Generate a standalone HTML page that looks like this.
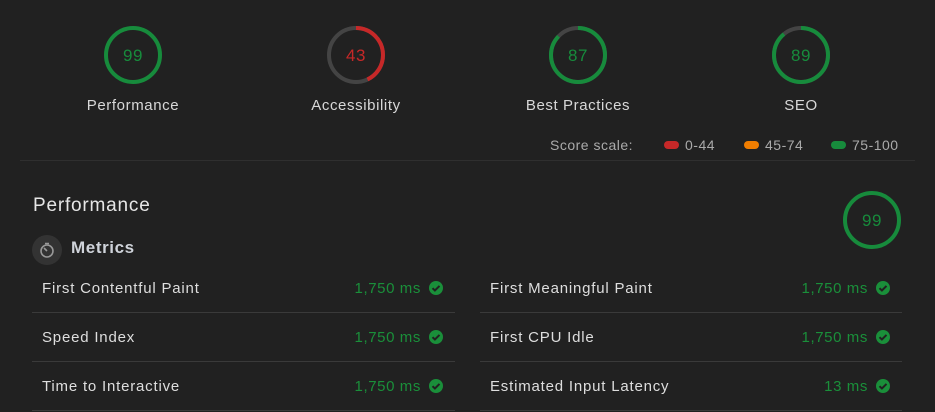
<!DOCTYPE html><html><head><style>
body{margin:0;width:935px;height:412px;background:#212121;font-family:"Liberation Sans",sans-serif;overflow:hidden;position:relative;color:#ddd}
.a{position:absolute}
.lbl{position:absolute;font-size:15px;color:#d8d8d8;text-align:center;width:200px;letter-spacing:0.6px}
.sc{font-size:14px;color:#aaa;letter-spacing:0.5px}
.row{position:absolute;height:49px;border-bottom:1px solid #3a3a3a;font-size:15px;color:#dedede;letter-spacing:0.8px}
.row span.n{position:absolute;left:10px;top:17px}
.row span.v{position:absolute;right:34px;top:17px;color:#1a8f3a;letter-spacing:0.6px}
.row svg{position:absolute;right:12px;top:18px}
</style></head><body>
<svg class="a" style="left:0;top:0" width="935" height="130">
<g fill="none" stroke-width="4">
<circle cx="133" cy="55" r="27" stroke="#178b3c"/>
<circle cx="356" cy="55" r="27" stroke="#444"/>
<circle cx="356" cy="55" r="27" stroke="#c62828" stroke-dasharray="72.9 200" transform="rotate(-90 356 55)"/>
<circle cx="578" cy="55" r="27" stroke="#444"/>
<circle cx="578" cy="55" r="27" stroke="#178b3c" stroke-dasharray="147.6 200" transform="rotate(-90 578 55)"/>
<circle cx="801" cy="55" r="27" stroke="#444"/>
<circle cx="801" cy="55" r="27" stroke="#178b3c" stroke-dasharray="151 200" transform="rotate(-90 801 55)"/>
</g>
<g font-family="Liberation Sans" font-size="17" text-anchor="middle" letter-spacing="0.5">
<text x="133" y="61" fill="#178b3c">99</text>
<text x="356" y="61" fill="#c62828">43</text>
<text x="578" y="61" fill="#178b3c">87</text>
<text x="801" y="61" fill="#178b3c">89</text>
</g></svg>
<div class="lbl" style="left:33px;top:97px">Performance</div>
<div class="lbl" style="left:256px;top:97px">Accessibility</div>
<div class="lbl" style="left:478px;top:97px">Best Practices</div>
<div class="lbl" style="left:701px;top:97px">SEO</div>
<div class="a sc" style="left:550px;top:137px">Score scale:</div>
<div class="a" style="left:664px;top:141px;width:15px;height:8px;border-radius:4px;background:#c62828"></div>
<div class="a sc" style="left:685px;top:137px">0-44</div>
<div class="a" style="left:744px;top:141px;width:15px;height:8px;border-radius:4px;background:#ef7d00"></div>
<div class="a sc" style="left:765px;top:137px">45-74</div>
<div class="a" style="left:831px;top:141px;width:15px;height:8px;border-radius:4px;background:#178b3c"></div>
<div class="a sc" style="left:852px;top:137px">75-100</div>
<div class="a" style="left:20px;top:160px;width:895px;height:1px;background:#2f2f2f"></div>
<div class="a" style="left:33px;top:195px;font-size:19px;color:#e6e6e6;letter-spacing:0.8px">Performance</div>
<svg class="a" style="left:842px;top:190px" width="62" height="62"><circle cx="30" cy="30" r="27" fill="none" stroke="#178b3c" stroke-width="4"/><text x="30" y="36" text-anchor="middle" font-family="Liberation Sans" font-size="17" fill="#178b3c" letter-spacing="0.5">99</text></svg>
<svg class="a" style="left:32px;top:235px" width="30" height="30"><circle cx="15" cy="15" r="15" fill="#333"/><circle cx="15" cy="16" r="6" fill="none" stroke="#999" stroke-width="1.6"/><path d="M15 16 L12 13 M13 8.5h4" stroke="#999" stroke-width="1.6"/></svg>
<div class="a" style="left:71px;top:238px;font-size:17px;font-weight:bold;color:#cfd3da;letter-spacing:0.6px">Metrics</div>
<div class="row" style="left:32px;top:263px;width:423px"><span class="n">First Contentful Paint</span><span class="v">1,750 ms</span><svg width="14" height="14"><circle cx="7" cy="7" r="7" fill="#1a8f3a"/><path d="M3.5 7.2l2.4 2.3 4.6-4.6" stroke="#212121" stroke-width="2" fill="none"/></svg></div>
<div class="row" style="left:32px;top:312px;width:423px"><span class="n">Speed Index</span><span class="v">1,750 ms</span><svg width="14" height="14"><circle cx="7" cy="7" r="7" fill="#1a8f3a"/><path d="M3.5 7.2l2.4 2.3 4.6-4.6" stroke="#212121" stroke-width="2" fill="none"/></svg></div>
<div class="row" style="left:32px;top:361px;width:423px"><span class="n">Time to Interactive</span><span class="v">1,750 ms</span><svg width="14" height="14"><circle cx="7" cy="7" r="7" fill="#1a8f3a"/><path d="M3.5 7.2l2.4 2.3 4.6-4.6" stroke="#212121" stroke-width="2" fill="none"/></svg></div>
<div class="row" style="left:480px;top:263px;width:422px"><span class="n">First Meaningful Paint</span><span class="v">1,750 ms</span><svg width="14" height="14"><circle cx="7" cy="7" r="7" fill="#1a8f3a"/><path d="M3.5 7.2l2.4 2.3 4.6-4.6" stroke="#212121" stroke-width="2" fill="none"/></svg></div>
<div class="row" style="left:480px;top:312px;width:422px"><span class="n">First CPU Idle</span><span class="v">1,750 ms</span><svg width="14" height="14"><circle cx="7" cy="7" r="7" fill="#1a8f3a"/><path d="M3.5 7.2l2.4 2.3 4.6-4.6" stroke="#212121" stroke-width="2" fill="none"/></svg></div>
<div class="row" style="left:480px;top:361px;width:422px"><span class="n">Estimated Input Latency</span><span class="v">13 ms</span><svg width="14" height="14"><circle cx="7" cy="7" r="7" fill="#1a8f3a"/><path d="M3.5 7.2l2.4 2.3 4.6-4.6" stroke="#212121" stroke-width="2" fill="none"/></svg></div>
</body></html>
